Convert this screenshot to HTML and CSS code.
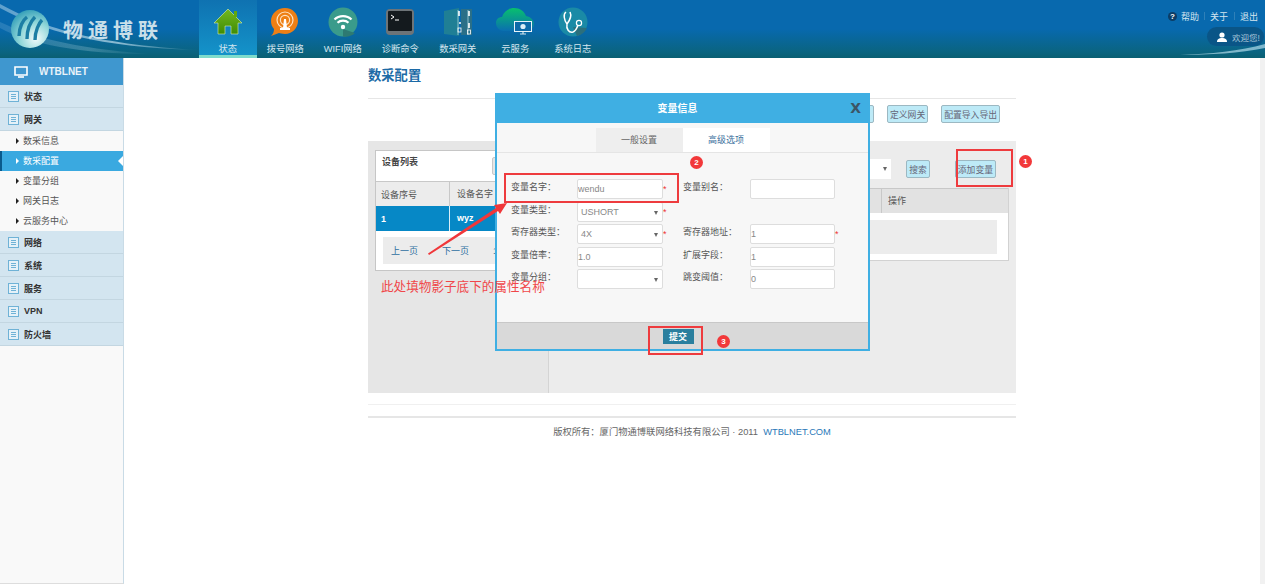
FILE: index.html
```html
<!DOCTYPE html>
<html lang="zh-CN">
<head>
    <meta charset="UTF-8">
    <title>数采配置</title>
    <link rel="stylesheet" href="styles.css">
</head>
<body>
    <!-- Top bar -->
    <header class="topbar">
        <svg class="swoosh" width="199" height="58" viewBox="0 0 199 58">
            <defs>
                <linearGradient id="swooshFill" x1="0" y1="0" x2="1" y2="0">
                    <stop offset="0" stop-color="#dff3fb" stop-opacity=".4"/>
                    <stop offset=".6" stop-color="#dff3fb" stop-opacity=".6"/>
                    <stop offset="1" stop-color="#dff3fb" stop-opacity="0"/>
                </linearGradient>
            </defs>
            <path d="M0 4C40 26 90 44 199 50C100 48 40 30 0 8Z" fill="url(#swooshFill)"/>
            <path d="M0 22C30 36 70 48 150 54C80 54 30 44 0 28Z" fill="url(#swooshFill)" opacity=".35"/>
        </svg>
        <svg class="swoosh-right" width="85" height="12" viewBox="0 0 85 12">
            <path d="M0 11C30 10 60 7 85 0V4C60 9 30 11 0 11Z" fill="#cdeefa" opacity=".6"/>
        </svg>
        <div class="logo">
            <svg class="logo-globe" width="40" height="40" viewBox="0 0 40 40">
                <defs>
                    <radialGradient id="globeFill" cx=".65" cy=".75" r=".85">
                        <stop offset="0" stop-color="#f2fbfb"/>
                        <stop offset=".5" stop-color="#8fd6d8"/>
                        <stop offset="1" stop-color="#2797b4"/>
                    </radialGradient>
                </defs>
                <circle cx="20" cy="20" r="19" fill="url(#globeFill)"/>
                <path d="M9 27C9 18 13 11 17 8M17 30C17 20 21 12 25 8M25 31C25 22 29 14 32 11" fill="none" stroke="#1c7ea4" stroke-width="3.4"/>
            </svg>
            <span class="logo-text">物通博联</span>
        </div>
        <nav class="topnav">
            <a class="topnav-item active">
                <svg width="30" height="30" viewBox="0 0 30 30">
                    <defs>
                        <linearGradient id="homeFill" x1="0" y1="0" x2="0" y2="1">
                            <stop offset="0" stop-color="#74b81f"/>
                            <stop offset="1" stop-color="#3f8c05"/>
                        </linearGradient>
                    </defs>
                    <path d="M15 2L29 16H25V27H18V19H12V27H5V16H1L15 2Z" fill="url(#homeFill)" stroke="#d8eeb0" stroke-width=".6"/>
                    <rect x="21" y="4" width="3" height="6" fill="#5fa80e"/>
                </svg>
                <span>状态</span>
            </a>
            <a class="topnav-item">
                <svg width="30" height="30" viewBox="0 0 30 30">
                    <path d="M15 1C23 1 28 7 28 14C28 21 22 27 15 27C12 27 10 26 9 26L1 29C3 27 4 25 4 22C2 20 1 17 1 14C1 7 7 1 15 1Z" fill="#ee7f14"/>
                    <circle cx="15" cy="13" r="8" fill="none" stroke="#fde3c4" stroke-width="1.2"/>
                    <circle cx="15" cy="13" r="4.6" fill="none" stroke="#fde3c4" stroke-width="1.2"/>
                    <path d="M14 12H16L17 21H20V23H10V21H13Z" fill="#fff"/>
                </svg>
                <span>拨号网络</span>
            </a>
            <a class="topnav-item">
                <svg width="30" height="30" viewBox="0 0 30 30">
                    <circle cx="15" cy="15" r="14.5" fill="#3a9b8b"/>
                    <path d="M15 22L27 26A14.5 14.5 0 0 1 15 29.5Z" fill="#2d7a72"/>
                    <path d="M6.5 12.5C11 8 19 8 23.5 12.5M9.5 15.8C12.5 13 17.5 13 20.5 15.8" fill="none" stroke="#fff" stroke-width="2.2"/>
                    <circle cx="15" cy="20" r="2.2" fill="#fff"/>
                </svg>
                <span>WIFI网络</span>
            </a>
            <a class="topnav-item">
                <svg width="30" height="30" viewBox="0 0 30 30">
                    <rect x="1" y="2" width="28" height="26" rx="4" fill="#6d7478"/>
                    <rect x="3" y="4" width="24" height="20" rx="1" fill="#141a1e"/>
                    <path d="M6 8L9 10L6 12" fill="none" stroke="#fff" stroke-width="1"/>
                    <path d="M10 13H14" stroke="#fff" stroke-width="1"/>
                </svg>
                <span>诊断命令</span>
            </a>
            <a class="topnav-item">
                <svg width="30" height="30" viewBox="0 0 30 30">
                    <path d="M1 4L16 1V29L1 27Z" fill="#1f7f95"/>
                    <path d="M18 2H29V28H18Z" fill="#2a6f88"/>
                    <path d="M15 3V28M25 3V28" stroke="#a9d8e0" stroke-width=".8"/>
                    <path d="M16 4V9M26 4V9M16 16H18M26 16V21" stroke="#fff" stroke-width="1.6"/>
                    <rect x="15" y="21" width="3" height="4" fill="none" stroke="#fff" stroke-width=".8"/>
                    <rect x="24.5" y="23" width="3" height="4" fill="none" stroke="#fff" stroke-width=".8"/>
                </svg>
                <span>数采网关</span>
            </a>
            <a class="topnav-item">
                <svg width="38" height="30" viewBox="0 0 38 30">
                    <defs>
                        <linearGradient id="cloudFill" x1="0" y1="0" x2="0" y2="1">
                            <stop offset="0" stop-color="#08c06d"/>
                            <stop offset="1" stop-color="#0a6fb0"/>
                        </linearGradient>
                    </defs>
                    <path d="M8 24C3 24 0 20 0 16C0 12 3 10 6 10C8 4 13 1 18 1C24 1 28 4 30 9C35 10 38 13 38 17C38 21 35 24 31 24Z" fill="url(#cloudFill)"/>
                    <rect x="18" y="14" width="18" height="11" fill="#e8f4fa"/>
                    <rect x="19" y="15" width="16" height="9" fill="#0d6aa8"/>
                    <circle cx="27" cy="19.5" r="2.6" fill="#dceef7"/>
                    <path d="M24 27H30M27 25V27" stroke="#cfe3ee" stroke-width="1.2"/>
                </svg>
                <span>云服务</span>
            </a>
            <a class="topnav-item">
                <svg width="30" height="30" viewBox="0 0 30 30">
                    <circle cx="15" cy="15" r="14.5" fill="#1a8aa6"/>
                    <path d="M15 20L29 21A14.5 14.5 0 0 1 19 29Z" fill="#2b6f7c"/>
                    <path d="M8 5C5 7 6 13 9 17C12 13 14 9 12 5M9 17C8 22 11 26 15 25C18 24 19 21 20 18" fill="none" stroke="#fff" stroke-width="1.5"/>
                    <circle cx="21" cy="16" r="2.6" fill="none" stroke="#fff" stroke-width="1.2"/>
                </svg>
                <span>系统日志</span>
            </a>
        </nav>
        <div class="toplinks">
            <div class="toplinks-row">
                <span class="help-icon">?</span>
                <a>帮助</a>
                <a class="sep sep-near">关于</a>
                <a class="sep">退出</a>
            </div>
            <div class="welcome">
                <svg width="10" height="10" viewBox="0 0 10 10">
                    <circle cx="5" cy="3" r="2.6" fill="#fff"/>
                    <path d="M0 10C0 7 2 6 5 6C8 6 10 7 10 10Z" fill="#fff"/>
                </svg>
                <span>欢迎您!</span>
            </div>
        </div>
    </header>

    <div class="page">
        <!-- Left menu -->
        <aside class="sidebar">
            <div class="sidebar-title">
                <svg width="14" height="12" viewBox="0 0 14 12">
                    <path d="M1 1H13V9H1Z" fill="none" stroke="#fff" stroke-width="1.6"/>
                    <path d="M4 11H10" stroke="#fff" stroke-width="1.6"/>
                </svg>
                <span>WTBLNET</span>
            </div>
            <a class="menu-item"><i class="menu-icon"></i>状态</a>
            <a class="menu-item"><i class="menu-icon"></i>网关</a>
            <ul class="submenu">
                <li>数采信息</li>
                <li class="current">数采配置</li>
                <li>变量分组</li>
                <li>网关日志</li>
                <li>云服务中心</li>
            </ul>
            <a class="menu-item"><i class="menu-icon"></i>网络</a>
            <a class="menu-item"><i class="menu-icon"></i>系统</a>
            <a class="menu-item"><i class="menu-icon"></i>服务</a>
            <a class="menu-item"><i class="menu-icon"></i>VPN</a>
            <a class="menu-item"><i class="menu-icon"></i>防火墙</a>
        </aside>

        <!-- Main content -->
        <main class="content">
            <h1 class="page-title">数采配置</h1>
            <div class="toolbar">
                <button class="btn btn-hidden"></button>
                <button class="btn">定义网关</button>
                <button class="btn">配置导入导出</button>
            </div>
            <div class="panel">
                <div class="panel-left">
                    <div class="device-card">
                        <div class="device-title">
                            <span>设备列表</span>
                            <i class="device-tool"></i>
                        </div>
                        <div class="device-head">
                            <span class="col-a">设备序号</span>
                            <span class="col-b">设备名字</span>
                        </div>
                        <div class="device-row">
                            <span class="col-a">1</span>
                            <span class="col-b">wyz</span>
                        </div>
                        <div class="pager">
                            <a>上一页</a>
                            <a>下一页</a>
                            <span>1/1</span>
                        </div>
                    </div>
                </div>
                <div class="panel-right">
                    <div class="search-bar">
                        <div class="search-select"><i class="caret"></i></div>
                        <button class="btn">搜索</button>
                        <button class="btn">添加变量</button>
                    </div>
                    <div class="var-table">
                        <div class="var-head"><span>操作</span></div>
                        <div class="var-body"><div class="var-empty"></div></div>
                    </div>
                </div>
            </div>
            <div class="footer-rule"></div>
            <footer class="footer">
                版权所有：厦门物通博联网络科技有限公司 · 2011 &nbsp;<a>WTBLNET.COM</a>
            </footer>
        </main>
        <div class="scrollbar"></div>
    </div>

    <!-- Dialog -->
    <div class="modal">
        <div class="modal-head">
            <span>变量信息</span>
            <b class="modal-close">X</b>
        </div>
        <div class="modal-body">
            <div class="tabs">
                <a class="tab tab-on">一般设置</a>
                <a class="tab">高级选项</a>
            </div>
            <form class="form-grid">
                <label>变量名字：</label>
                <input class="field" value="wendu">
                <em>*</em>
                <label>变量别名：</label>
                <input class="field" value="">
                <em></em>

                <label>变量类型：</label>
                <div class="field select-field">USHORT<i class="caret"></i></div>
                <em>*</em>
                <span></span><span></span><em></em>

                <label>寄存器类型：</label>
                <div class="field select-field">4X<i class="caret"></i></div>
                <em>*</em>
                <label>寄存器地址：</label>
                <input class="field" value="1">
                <em>*</em>

                <label>变量倍率：</label>
                <input class="field" value="1.0">
                <em></em>
                <label>扩展字段：</label>
                <input class="field" value="1">
                <em></em>

                <label>变量分组：</label>
                <div class="field select-field"><i class="caret"></i></div>
                <em></em>
                <label>跳变阈值：</label>
                <input class="field" value="0">
                <em></em>
            </form>
        </div>
        <div class="modal-foot">
            <button class="submit-btn" type="button">提交</button>
        </div>
    </div>

    <!-- Red marks drawn over the screenshot -->
    <div class="mark mark-add"></div>
    <div class="mark mark-name"></div>
    <div class="mark mark-submit"></div>
    <span class="badge badge-1">1</span>
    <span class="badge badge-2">2</span>
    <span class="badge badge-3">3</span>
    <svg class="mark-arrow" width="90" height="60" viewBox="0 0 90 60">
        <path d="M1 55.5L69 10L67 7L80 5L73 16L71 13L2 57Z" fill="#f0373a"/>
    </svg>
    <div class="mark-note">此处填物影子底下的属性名称</div>
</body>
</html>
```

FILE: styles.css
```css
* {
    margin: 0;
    padding: 0;
    box-sizing: border-box;
}

body {
    height: 587px;
    overflow: hidden;
    background-color: #fff;
    color: #555;
    font-family: "Liberation Sans", "Noto Sans CJK SC", sans-serif;
    font-size: 9px;
}

/* Top bar */
.topbar {
    position: relative;
    display: flex;
    height: 58px;
    background: linear-gradient(#0869ae 0, #0869ae 50%, #0a6480 90%, #0a5f72 100%);
    color: #d5e6f0;
}

.swoosh {
    position: absolute;
    left: 0;
    top: 0;
}

.swoosh-right {
    position: absolute;
    right: 0;
    top: 44px;
}

.logo {
    position: relative;
    display: flex;
    align-items: center;
    width: 199px;
    padding-left: 10px;
}

.logo-text {
    margin-left: 13px;
    font-size: 20px;
    font-weight: 700;
    letter-spacing: 5px;
    color: #c9dfe9;
}

.topnav {
    display: flex;
}

.topnav-item {
    display: flex;
    flex-direction: column;
    align-items: center;
    width: 57.5px;
    height: 58px;
    padding-top: 7px;
    font-size: 9.3px;
}

.topnav-item span {
    margin-top: 4px;
}

.topnav-item.active {
    background: linear-gradient(#0f72b1, #1493c9);
    border-bottom: 3px solid #7fdccb;
}

.toplinks {
    position: absolute;
    top: 10px;
    right: 1px;
    display: flex;
    flex-direction: column;
    align-items: flex-end;
    gap: 4px;
}

.toplinks-row {
    display: flex;
    align-items: center;
    gap: 3px;
    height: 13px;
    padding-right: 6px;
}

.toplinks-row .sep {
    position: relative;
    margin-left: 9px;
}

.toplinks-row .sep-near {
    margin-left: 8px;
}

.sep::before {
    content: "";
    position: absolute;
    left: -6px;
    top: 2px;
    height: 8px;
    border-left: 1px solid #2f80b8;
}

.help-icon {
    width: 9px;
    height: 9px;
    margin-right: 1px;
    border-radius: 50%;
    background-color: #0b3d66;
    color: #fff;
    font-size: 8px;
    font-weight: 700;
    line-height: 9px;
    text-align: center;
}

.welcome {
    display: flex;
    align-items: center;
    gap: 5px;
    width: 57px;
    height: 19px;
    padding-left: 10px;
    border-radius: 10px;
    background-color: #0a5587;
    color: #a9c5d8;
    font-size: 8.5px;
}

/* Page columns */
.page {
    display: flex;
    height: 526px;
}

.sidebar {
    width: 124px;
    border-right: 1px solid #c9dbe6;
    border-bottom: 1px solid #ddd;
    background-color: #f9f9f9;
}

.sidebar-title {
    display: flex;
    align-items: center;
    gap: 11px;
    height: 27px;
    padding-left: 14px;
    background-color: #3f97cf;
    color: #e9f3f9;
    font-size: 10px;
    font-weight: 700;
}

.menu-item {
    display: flex;
    align-items: center;
    gap: 5px;
    height: 23px;
    padding-left: 8px;
    border-bottom: 1px solid #c3d6e1;
    background-color: #d3e5f0;
    color: #333;
    font-weight: 700;
}

.menu-icon {
    width: 11px;
    height: 11px;
    border: 1px solid #6fb2d6;
    background:
        linear-gradient(#6fb2d6, #6fb2d6) 2px 2px / 5px 1px no-repeat,
        linear-gradient(#6fb2d6, #6fb2d6) 2px 4px / 5px 1px no-repeat,
        linear-gradient(#6fb2d6, #6fb2d6) 2px 6px / 5px 1px no-repeat,
        #e5f1f8;
}

.submenu {
    list-style: none;
}

.submenu li {
    position: relative;
    height: 20px;
    padding-left: 23px;
    line-height: 20px;
    color: #555;
}

.submenu li::before {
    content: "";
    position: absolute;
    left: 16px;
    top: 7px;
    border-left: 3px solid #222;
    border-top: 3px solid transparent;
    border-bottom: 3px solid transparent;
}

.submenu .current {
    border-left: 2px solid #0a5a8c;
    padding-left: 21px;
    background-color: #3aa9e0;
    color: #fff;
}

.submenu .current::before {
    left: 14px;
    border-left-color: #fff;
}

.submenu .current::after {
    content: "";
    position: absolute;
    right: 0;
    top: 5px;
    border-right: 5px solid #fff;
    border-top: 5px solid transparent;
    border-bottom: 5px solid transparent;
}

/* Main content */
.content {
    flex: 1;
    padding: 0 244px 0 244px;
}

.page-title {
    height: 41px;
    padding-top: 9px;
    border-bottom: 1px solid #e6e6e6;
    color: #1c6aa6;
    font-size: 13.3px;
    font-weight: 700;
    line-height: 18px;
}

.toolbar {
    display: flex;
    justify-content: flex-end;
    gap: 13px;
    height: 42px;
    padding: 6px 16px 0 0;
}

.btn {
    height: 18px;
    padding: 0 2px;
    border: 1px solid #9cb8c2;
    border-radius: 2px;
    background-color: #bdeaf7;
    color: #667;
    font-family: inherit;
    font-size: 8.8px;
}

/* this one sits behind the dialog, only its right edge shows */
.btn-hidden {
    width: 41px;
}

.panel {
    display: flex;
    height: 252px;
    background-color: #ececec;
}

.panel-left {
    width: 181px;
    padding: 9px 0 0 7px;
    border-right: 1px solid #d4d4d4;
    background-color: #e6e6e6;
}

.device-card {
    width: 174px;
    height: 121px;
    border: 1px solid #c6c6c6;
    background-color: #fff;
}

.device-title {
    display: flex;
    height: 30px;
    padding: 4px 0 0 6px;
    font-weight: 700;
    color: #444;
}

.device-tool {
    width: 20px;
    height: 18px;
    margin: 2px 0 0 74px;
    border: 1px solid #c8c8c8;
    border-radius: 2px;
    background-color: #e6e6e6;
}

.device-head,
.device-row {
    display: flex;
    align-items: center;
    height: 25px;
    border-top: 1px solid #c8c8c8;
    background-color: #ececec;
}

.device-row {
    background-color: #0688c6;
    border-top: 0;
    color: #fff;
    font-weight: 700;
}

.col-a {
    width: 73px;
    padding-left: 5px;
}

.col-b {
    display: block;
    height: 100%;
    padding-left: 7px;
    border-left: 1px solid #c8c8c8;
    line-height: 24px;
}

.device-row .col-b {
    border-left-color: #d8eef8;
}

.pager {
    display: flex;
    gap: 24px;
    align-items: center;
    height: 27px;
    margin: 6px 0 0 7px;
    padding-left: 8px;
    background-color: #ececec;
    color: #2f6f9f;
}

.panel-right {
    flex: 1;
    padding: 17px 7px 0 0;
}

.search-bar {
    display: flex;
    justify-content: flex-end;
    align-items: center;
    height: 22px;
    padding-right: 13px;
    gap: 25px;
}

.search-select {
    position: relative;
    width: 40px;
    height: 20px;
    margin-right: -10px;
    background-color: #fff;
}

.var-table {
    margin-top: 8px;
    border: 1px solid #d2d2d2;
    border-top: 0;
    background-color: #fff;
}

.var-head {
    height: 25px;
    padding-left: 331px;
    background-color: #e2e2e2;
    border-top: 1px solid #c8c8c8;
    line-height: 24px;
}

.var-head span {
    display: block;
    height: 100%;
    border-left: 1px solid #c8c8c8;
    padding-left: 6px;
}

.var-body {
    height: 47px;
    padding: 7px 11px 0 0;
}

.var-empty {
    height: 34px;
    background-color: #ececec;
}

.footer-rule {
    height: 14px;
    margin-top: 11px;
    border-top: 1px solid #f0f0f0;
    border-bottom: 2px solid #e6e6e6;
}

.footer {
    padding-top: 6px;
    color: #666;
    font-size: 9.3px;
    text-align: center;
}

.footer a {
    color: #2a78b8;
}

.scrollbar {
    width: 5px;
    background-color: #f1f1f1;
}

/* Dialog */
.modal {
    position: absolute;
    left: 495px;
    top: 93px;
    display: flex;
    flex-direction: column;
    width: 375px;
    height: 258px;
    border: 2px solid #3fafe3;
    background-color: #f7f7f7;
}

.modal-head {
    position: relative;
    height: 28px;
    padding-right: 10px;
    background-color: #3fafe3;
    color: #fff;
    font-size: 10px;
    font-weight: 700;
    line-height: 28px;
    text-align: center;
}

.modal-close {
    position: absolute;
    right: 7px;
    top: -1px;
    color: #3c5566;
    font-family: "DejaVu Sans", sans-serif;
    font-size: 14px;
}

.modal-body {
    flex: 1;
}

.tabs {
    display: flex;
    justify-content: center;
    height: 30px;
    padding-top: 5px;
    border-bottom: 1px solid #e5e5e5;
}

.tab {
    width: 87px;
    background-color: #fff;
    color: #3a6f9c;
    line-height: 24px;
    text-align: center;
}

.tab-on {
    background-color: #eee;
    color: #666;
}

.form-grid {
    display: grid;
    grid-template-columns: 66px 86px 20px 67px 85px 12px;
    grid-auto-rows: 20px;
    row-gap: 2.5px;
    align-items: center;
    padding: 26px 0 0 14px;
}

.form-grid label {
    align-self: start;
    padding-top: 1px;
    color: #555;
}

.form-grid em {
    color: #e33;
    font-style: normal;
}

.field {
    width: 100%;
    height: 20px;
    border: 1px solid #ddd;
    border-radius: 2px;
    background-color: #fff;
    color: #888;
    font-family: inherit;
    font-size: 9px;
}

.select-field {
    position: relative;
    padding-left: 3px;
    line-height: 18px;
}

.caret {
    position: absolute;
    right: 4px;
    top: 8px;
    border-top: 4px solid #666;
    border-left: 2px solid transparent;
    border-right: 2px solid transparent;
}

.modal-foot {
    display: flex;
    justify-content: center;
    align-items: center;
    height: 27px;
    border-top: 1px solid #c8c8c8;
    background-color: #d9d9d9;
    padding-right: 9px;
}

.submit-btn {
    width: 31px;
    height: 15px;
    border: 0;
    background-color: #2a7f9e;
    color: #fff;
    font-family: inherit;
    font-size: 9px;
    font-weight: 700;
}

/* Red marks */
.mark {
    position: absolute;
    border: 2px solid #ee3b3e;
}

.mark-add {
    left: 956px;
    top: 149px;
    width: 57px;
    height: 38px;
}

.mark-name {
    left: 504px;
    top: 173px;
    width: 175px;
    height: 30px;
}

.mark-submit {
    left: 648px;
    top: 326px;
    width: 55px;
    height: 29px;
}

.badge {
    position: absolute;
    width: 13px;
    height: 13px;
    border-radius: 50%;
    background-color: #f2383a;
    color: #fff;
    font-size: 8px;
    font-weight: 700;
    line-height: 13px;
    text-align: center;
}

.badge-1 {
    left: 1019px;
    top: 155px;
}

.badge-2 {
    left: 690px;
    top: 156px;
}

.badge-3 {
    left: 717px;
    top: 335px;
}

.mark-arrow {
    position: absolute;
    left: 427px;
    top: 198px;
}

.mark-note {
    position: absolute;
    left: 381px;
    top: 279px;
    color: #f0474a;
    font-size: 12.6px;
    line-height: 16px;
}
```
